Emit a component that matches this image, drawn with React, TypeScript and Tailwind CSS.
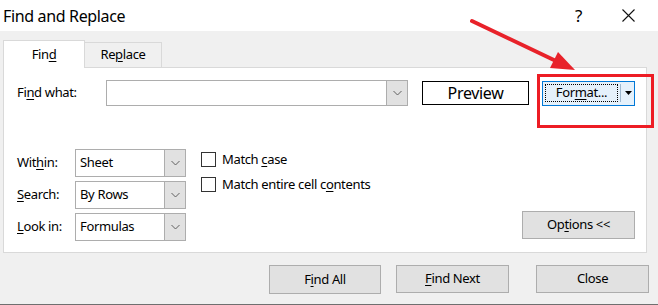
const font = { fontFamily: '"Noto Sans", "Segoe UI", sans-serif' };

function U({ children }: { children: string }) {
  return <span className="underline underline-offset-2 decoration-1">{children}</span>;
}

function Chevron() {
  return (
    <svg width="9" height="6" viewBox="0 0 9 6" fill="none">
      <path d="M0.5 1 L4.5 5 L8.5 1" stroke="#606060" strokeWidth="1" />
    </svg>
  );
}

function Select({ value, w }: { value: string; w: string }) {
  return (
    <div className={`flex h-[28px] ${w} border border-[#adadad] bg-white`}>
      <div className="flex-1 pl-[4px] flex items-center text-[13px] text-black">{value}</div>
      <div className="w-[21px] bg-[#e1e1e1] border-l border-[#adadad] flex items-center justify-center">
        <Chevron />
      </div>
    </div>
  );
}

function Check({ children }: { children: React.ReactNode }) {
  return (
    <div className="flex items-center h-[15px] gap-[6px]">
      <div className="w-[15px] h-[15px] border border-[#333] bg-white" />
      <span className="text-[13px] text-black leading-none">{children}</span>
    </div>
  );
}

function Button({ children, w }: { children: React.ReactNode; w: string }) {
  return (
    <div className={`${w} h-[28px] border border-[#adadad] bg-[#e1e1e1] flex items-center justify-center text-[13px] text-black`}>
      {children}
    </div>
  );
}

export default function App() {
  return (
    <div className="relative w-[658px] h-[305px] bg-[#f0f0f0] border-b border-[#6f6f6f] overflow-hidden tracking-[-0.35px]" style={font}>
      {/* title bar */}
      <div className="h-[31px] bg-white flex items-center pl-[3px]">
        <span className="text-[16px] text-black">Find and Replace</span>
        <span className="ml-auto text-[17px] text-black mr-[40px]">?</span>
        <svg width="13" height="13" viewBox="0 0 13 13" className="mr-[23px]">
          <path d="M0.5 0.5 L12.5 12.5 M12.5 0.5 L0.5 12.5" stroke="#111" strokeWidth="1.1" />
        </svg>
      </div>

      {/* tabs */}
      <div className="mt-[9px] pl-[3px] flex items-end h-[27px] relative z-10">
        <div className="w-[82px] h-[28px] -mb-px bg-white border border-b-0 border-[#d9d9d9] flex items-center justify-center text-[13px] text-black">
          Fin<U>d</U>
        </div>
        <div className="w-[77px] h-[25px] bg-[#f0f0f0] border border-l-0 border-b-0 border-[#d9d9d9] flex items-center justify-center text-[13px] text-black">
          Re<U>p</U>lace
        </div>
      </div>

      {/* panel */}
      <div className="ml-[3px] w-[644px] h-[186px] bg-white border border-[#d9d9d9] flex flex-col">
        <div className="flex items-center pl-[13px] pt-[12px]">
          <span className="w-[89px] text-[13px] text-black">Fi<U>n</U>d what:</span>
          <div className="flex w-[302px] h-[26px] border border-[#adadad] bg-white">
            <div className="flex-1" />
            <div className="w-[21px] bg-[#e1e1e1] border-l border-[#adadad] flex items-center justify-center">
              <Chevron />
            </div>
          </div>
          <div className="ml-[14px] w-[107px] h-[24px] border border-black bg-white flex items-center justify-center text-[16px] text-black">
            Preview
          </div>
          <div className="ml-[13px] w-[93px] h-[25px] border border-[#0078d7] bg-[#e5f1fb] flex items-center p-[2px]">
            <div className="w-[73px] h-[18px] border border-dotted border-black flex items-center justify-center text-[13px] text-black">
              For<U>m</U>at...
            </div>
            <div className="ml-[2px] w-px h-[18px] bg-[#9fb8cf]" />
            <svg width="7" height="4" viewBox="0 0 7 4" className="ml-[4px]">
              <path d="M0 0 H7 L3.5 4 Z" fill="#000" />
            </svg>
          </div>
        </div>

        <div className="flex pl-[13px] pr-[11px] mt-[43px]">
          <div className="flex flex-col gap-[4px]">
            <div className="flex items-center">
              <span className="w-[58px] text-[13px] text-black">Wit<U>h</U>in:</span>
              <Select value="Sheet" w="w-[111px]" />
            </div>
            <div className="flex items-center">
              <span className="w-[58px] text-[13px] text-black"><U>S</U>earch:</span>
              <Select value="By Rows" w="w-[111px]" />
            </div>
            <div className="flex items-center">
              <span className="w-[58px] text-[13px] text-black"><U>L</U>ook in:</span>
              <Select value="Formulas" w="w-[111px]" />
            </div>
          </div>
          <div className="ml-[15px] mt-[3px] flex flex-col gap-[10px]">
            <Check>Match <U>c</U>ase</Check>
            <Check>Match entire cell c<U>o</U>ntents</Check>
          </div>
          <div className="ml-auto self-end mb-[2px]">
            <Button w="w-[113px]">Op<U>t</U>ions &lt;&lt;</Button>
          </div>
        </div>
      </div>

      {/* bottom buttons */}
      <div className="flex justify-end mt-[12px] pr-[9px]">
        <Button w="w-[112px] h-[29px]">F<U>i</U>nd All</Button>
        <div className="ml-[15px]">
          <Button w="w-[113px]"><U>F</U>ind Next</Button>
        </div>
        <div className="ml-[27px]">
          <Button w="w-[113px]">Close</Button>
        </div>
      </div>

      {/* annotations */}
      <div className="absolute left-[537px] top-[74px] w-[117px] h-[54px] border-[3px] border-[#ed1c24] z-20" />
      <svg className="absolute left-0 top-0 z-20 pointer-events-none" width="658" height="305">
        <line x1="472" y1="21" x2="556" y2="61" stroke="#e8222a" strokeWidth="4" strokeLinecap="round" />
        <polygon points="575,70 550,68 558,52" fill="#e8222a" />
      </svg>
    </div>
  );
}
